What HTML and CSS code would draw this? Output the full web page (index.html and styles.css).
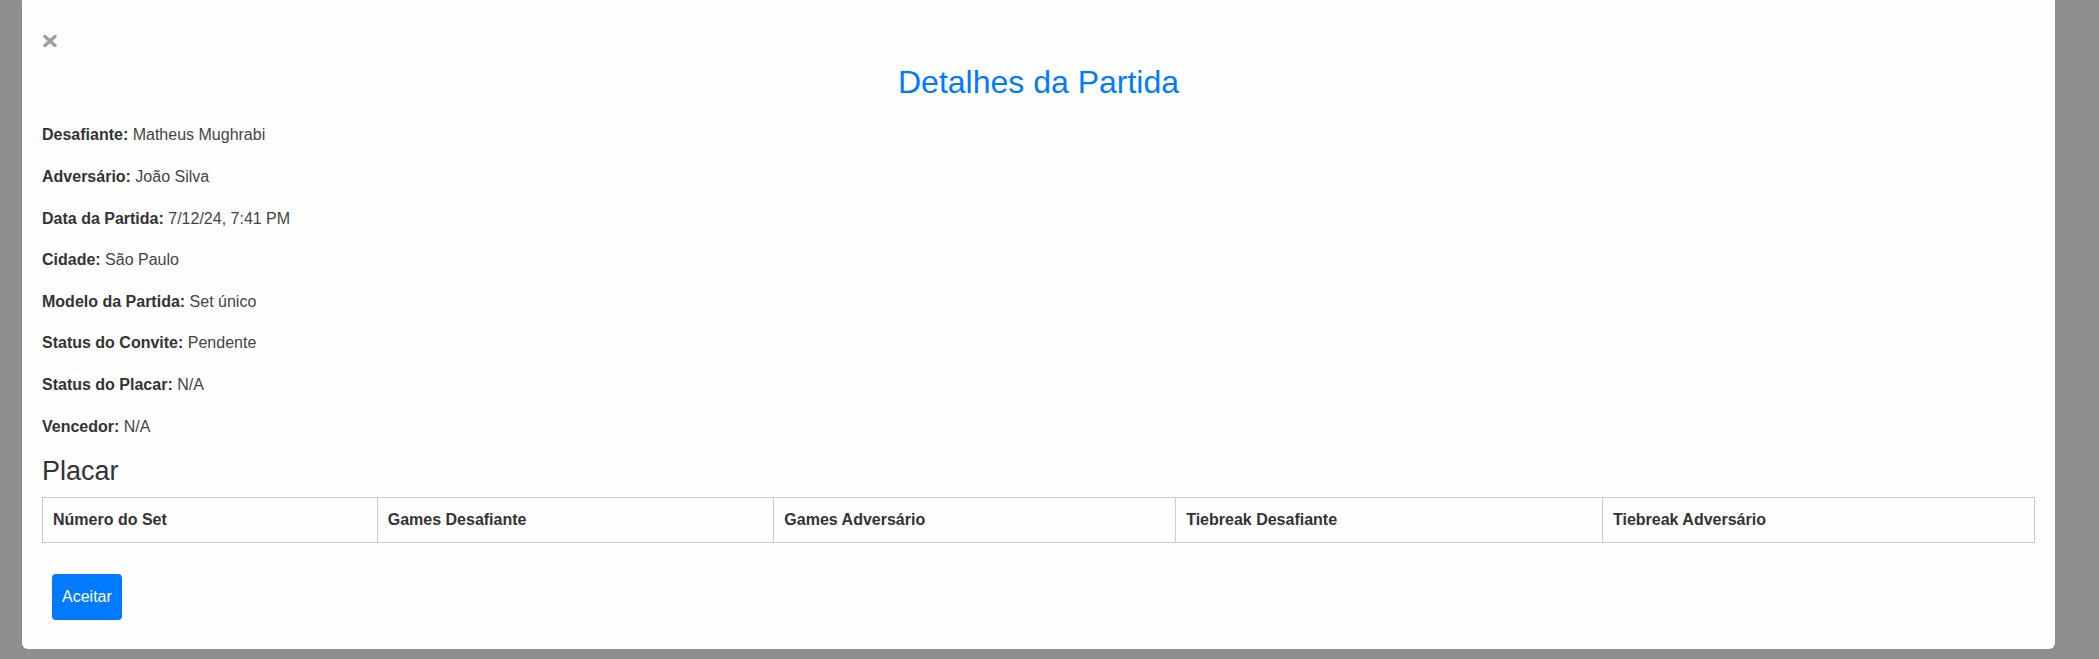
FILE: index.html
```html
<!DOCTYPE html>
<html lang="pt-BR">
<head>
<meta charset="utf-8">
<title>Detalhes da Partida</title>
<link rel="stylesheet" href="styles.css">
</head>
<body>
<div class="modal">
  <button class="close" aria-label="Fechar">
    <svg width="14" height="12" viewBox="0 0 14 12"><path d="M2 1.5 L12 10.5 M12 1.5 L2 10.5" stroke="#a0a0a0" stroke-width="3.4" stroke-linecap="round" fill="none"/></svg>
  </button>
  <h2 class="title">Detalhes da Partida</h2>
  <p class="info"><strong>Desafiante:</strong> Matheus Mughrabi</p>
  <p class="info"><strong>Adversário:</strong> João Silva</p>
  <p class="info"><strong>Data da Partida:</strong> 7/12/24, 7:41 PM</p>
  <p class="info"><strong>Cidade:</strong> São Paulo</p>
  <p class="info"><strong>Modelo da Partida:</strong> Set único</p>
  <p class="info"><strong>Status do Convite:</strong> Pendente</p>
  <p class="info"><strong>Status do Placar:</strong> N/A</p>
  <p class="info"><strong>Vencedor:</strong> N/A</p>
  <h4 class="subtitle">Placar</h4>
  <table class="score">
    <thead>
      <tr>
        <th>Número do Set</th>
        <th>Games Desafiante</th>
        <th>Games Adversário</th>
        <th>Tiebreak Desafiante</th>
        <th>Tiebreak Adversário</th>
      </tr>
    </thead>
  </table>
  <button class="btn-accept">Aceitar</button>
</div>
</body>
</html>
```
FILE: styles.css
```css
html, body {
  margin: 0;
  padding: 0;
}
body {
  background: #8f8f90;
  font-family: "Liberation Sans", Arial, sans-serif;
  font-size: 16px;
  color: #333;
  height: 659px;
  overflow: hidden;
}
.modal {
  margin: -4px 0 0 22px;
  width: 2033px;
  box-sizing: border-box;
  background: #fefefe;
  border-radius: 6px;
  padding: 39px 20px 29px 20px;
}
.close {
  display: block;
  border: 0;
  background: none;
  padding: 0;
  margin: 0 0 0 1px;
  height: 12px;
  cursor: pointer;
}
.close svg {
  display: block;
}
.title {
  margin: 16px 0 21px;
  text-align: center;
  font-weight: normal;
  font-size: 32px;
  line-height: 1.2;
  color: #007bff;
}
.info {
  margin: 0 0 16px;
  line-height: 1.6;
  color: #444;
}
.info strong {
  color: #333;
}
.subtitle {
  margin: 0 0 9px;
  font-size: 27px;
  font-weight: normal;
  line-height: 1.2;
  color: #333;
}
.score {
  width: 100%;
  border-collapse: collapse;
  margin-bottom: 31px;
}
.score th {
  border: 1px solid #ccc;
  padding: 10px 10px;
  text-align: left;
  line-height: 24px;
  font-weight: bold;
  color: #333;
}
.btn-accept {
  display: block;
  margin-left: 10px;
  background: #007bff;
  color: #fff;
  border: 0;
  border-radius: 4px;
  padding: 11px 10px;
  font-family: "Liberation Sans", Arial, sans-serif;
  font-size: 16px;
  line-height: 24px;
}
```
